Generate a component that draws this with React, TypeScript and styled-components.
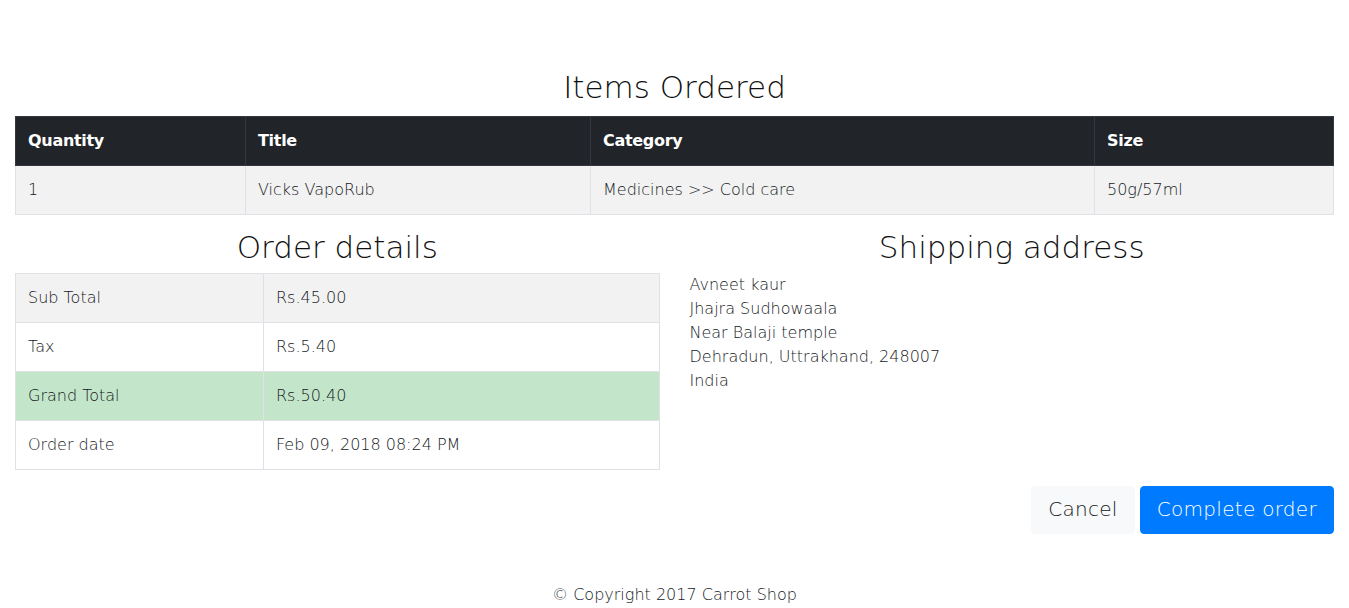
import React from "react";
import styled, { createGlobalStyle } from "styled-components";

const Global = createGlobalStyle`
  html, body { margin: 0; padding: 0; background: #fff; }
  body {
    font-family: "DejaVu Sans", "Open Sans", sans-serif;
    font-weight: 200;
    font-size: 16px;
    line-height: 24px;
    color: #212529;
  }
  * { box-sizing: border-box; }
`;

const Page = styled.div`
  padding: 68px 15px 0;
`;

const Heading = styled.h2<{ $top?: number; $bottom?: number }>`
  margin: ${(p) => p.$top ?? 0}px 0 ${(p) => p.$bottom ?? 0}px;
  font-size: 31px;
  line-height: 38px;
  font-weight: 200;
  color: #111;
  text-align: center;
`;

const Table = styled.table`
  width: 100%;
  border-collapse: collapse;
  margin-bottom: 16px;
`;

const Th = styled.th<{ $w?: string }>`
  background: #212529;
  color: #fff;
  text-align: left;
  font-weight: 700;
  letter-spacing: -0.3px;
  padding: 12px;
  border: 1px solid #32383e;
  width: ${(p) => p.$w ?? "auto"};
`;

const Td = styled.td<{ $w?: string }>`
  padding: 12px;
  border: 1px solid #dee2e6;
  color: #16191c;
  width: ${(p) => p.$w ?? "auto"};
`;

const Tr = styled.tr<{ $tone?: "stripe" | "success" | "plain" }>`
  background: ${(p) =>
    p.$tone === "success" ? "#c3e6cb" : p.$tone === "stripe" ? "#f2f2f2" : "#fff"};
`;

const Row = styled.div`
  display: grid;
  grid-template-columns: 1fr 1fr;
  margin: 0 -15px;
`;

const Col = styled.div`
  padding: 0 15px;
`;

const Address = styled.div`
  line-height: 24px;
  color: #16191c;
`;

const Actions = styled.div`
  display: flex;
  justify-content: flex-end;
  gap: 5px;
`;

const Button = styled.button<{ $primary?: boolean }>`
  font-family: inherit;
  font-weight: 200;
  font-size: 20px;
  line-height: 30px;
  letter-spacing: 0.3px;
  padding: 7px 16px 9px;
  border-radius: 4px;
  border: 1px solid ${(p) => (p.$primary ? "#007bff" : "#f8f9fa")};
  background: ${(p) => (p.$primary ? "#007bff" : "#f8f9fa")};
  color: ${(p) => (p.$primary ? "#fff" : "#16191c")};
  cursor: pointer;
`;

const Footer = styled.footer`
  text-align: center;
  margin-top: 49px;
  line-height: 24px;
  color: #16191c;
`;

export default function App() {
  return (
    <>
      <Global />
      <Page>
        <Heading $bottom={10}>Items Ordered</Heading>
        <Table>
          <thead>
            <tr>
              <Th $w="230px">Quantity</Th>
              <Th $w="345px">Title</Th>
              <Th $w="504px">Category</Th>
              <Th>Size</Th>
            </tr>
          </thead>
          <tbody>
            <Tr $tone="stripe">
              <Td>1</Td>
              <Td>Vicks VapoRub</Td>
              <Td>Medicines &gt;&gt; Cold care</Td>
              <Td>50g/57ml</Td>
            </Tr>
          </tbody>
        </Table>
        <Row>
          <Col>
            <Heading $top={-3} $bottom={7}>Order details</Heading>
            <Table>
              <tbody>
                <Tr $tone="stripe">
                  <Td $w="248px">Sub Total</Td>
                  <Td>Rs.45.00</Td>
                </Tr>
                <Tr $tone="plain">
                  <Td>Tax</Td>
                  <Td>Rs.5.40</Td>
                </Tr>
                <Tr $tone="success">
                  <Td>Grand Total</Td>
                  <Td>Rs.50.40</Td>
                </Tr>
                <Tr $tone="plain">
                  <Td>Order date</Td>
                  <Td>Feb 09, 2018 08:24 PM</Td>
                </Tr>
              </tbody>
            </Table>
          </Col>
          <Col>
            <Heading $top={-3} $bottom={7}>Shipping address</Heading>
            <Address>
              Avneet kaur
              <br />
              Jhajra Sudhowaala
              <br />
              Near Balaji temple
              <br />
              Dehradun, Uttrakhand, 248007
              <br />
              India
            </Address>
          </Col>
        </Row>
        <Actions>
          <Button>Cancel</Button>
          <Button $primary>Complete order</Button>
        </Actions>
        <Footer>© Copyright 2017 Carrot Shop</Footer>
      </Page>
    </>
  );
}
